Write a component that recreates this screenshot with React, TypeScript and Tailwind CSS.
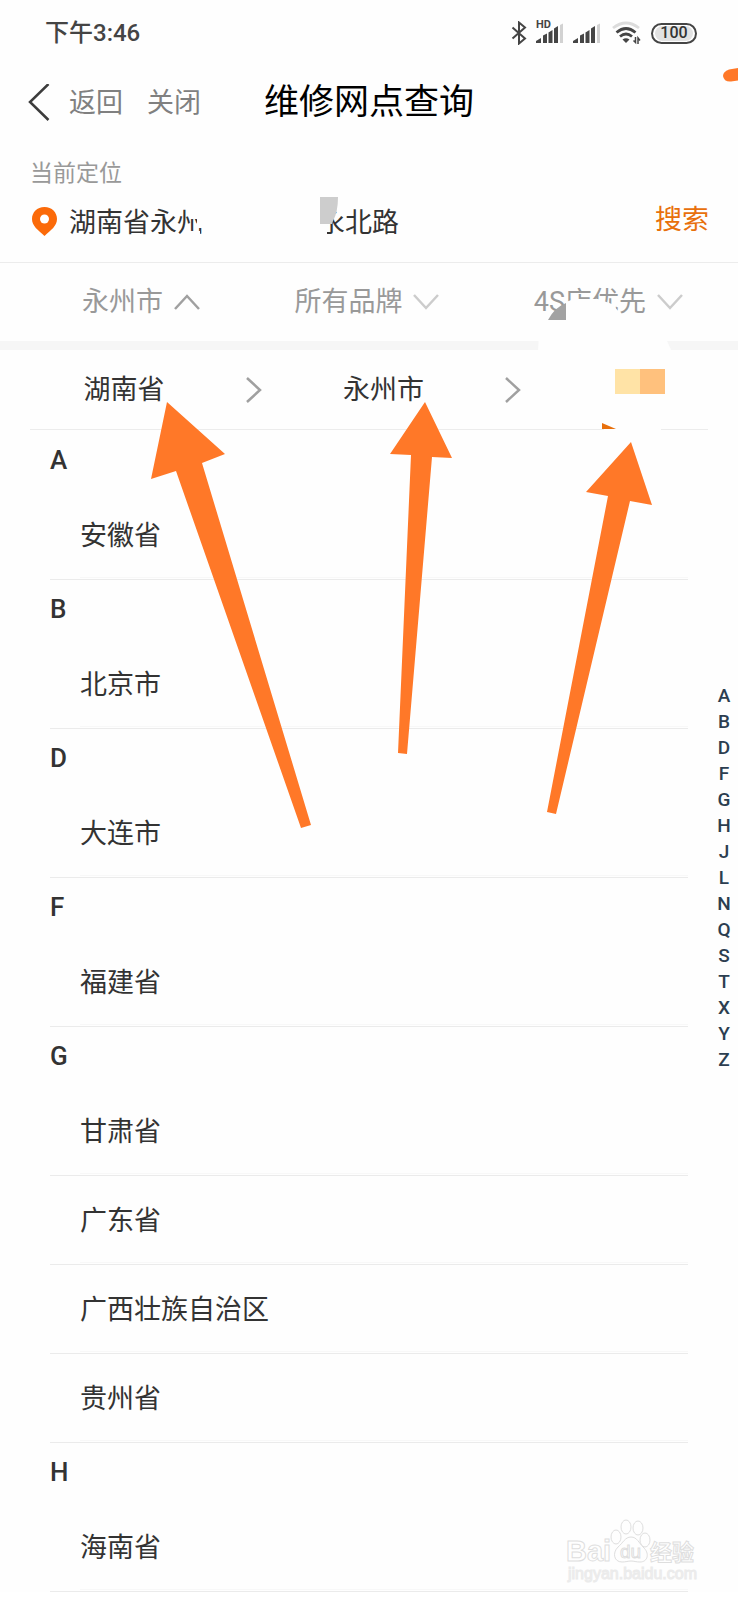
type Section = { letter: string; regions: string[] };

const sections: Section[] = [
  { letter: "A", regions: ["安徽省"] },
  { letter: "B", regions: ["北京市"] },
  { letter: "D", regions: ["大连市"] },
  { letter: "F", regions: ["福建省"] },
  { letter: "G", regions: ["甘肃省", "广东省", "广西壮族自治区", "贵州省"] },
  { letter: "H", regions: ["海南省"] },
];

const indexLetters = ["A", "B", "D", "F", "G", "H", "J", "L", "N", "Q", "S", "T", "X", "Y", "Z"];

function SignalIcon() {
  return (
    <svg width="28" height="20" viewBox="0 0 28 20" fill="#454545">
      <path d="M0 20v-2l5-3v5z" />
      <path d="M7 12.5l4-2V20H7z" />
      <path d="M12.500 9.500l4-2.500v13h-4z" />
      <path d="M18 5.500l4-2.500V20h-4z" />
      <path d="M24 2l3-1.500V20h-3z" fill="#d2d2d2" />
    </svg>
  );
}

function StatusBar() {
  return (
    <div className="flex h-[66px] items-center justify-between pl-[45px] pr-[41px]">
      <span className="text-[24px] font-medium text-[#444]">下午3:46</span>
      <div className="flex items-center">
        <svg width="16" height="24" viewBox="0 0 16 24" fill="none" stroke="#454545" strokeWidth="2">
          <path d="M1.500 6.500L14 17.500 8 22.500V1.500l6 5L1.500 17.500" />
        </svg>
        <div className="relative ml-[9px]">
          <SignalIcon />
          <span className="absolute -top-1 left-0 text-[11px] leading-[11px] font-bold text-[#454545]">HD</span>
        </div>
        <div className="ml-[9px]">
          <SignalIcon />
        </div>
        <svg className="ml-[11px]" width="29" height="24" viewBox="0 0 29 24" fill="none" strokeWidth="2.800">
          <path d="M1 7q13-10 26 0" stroke="#dcdcdc" />
          <path d="M4.500 11.500q9.500-8 19 0" stroke="#454545" />
          <path d="M8 15.500q6-5 12 0" stroke="#454545" />
          <path d="M10.500 18.500q3.500-2.500 7 0L14 22z" fill="#454545" />
          <path d="M23.500 16v5.500l-2-2M26 23v-6l2 2.500" stroke="#454545" strokeWidth="1.500" />
        </svg>
        <span className="ml-[10px] flex h-[21px] w-[46px] items-center justify-center rounded-full border-2 border-[#454545] p-[2px]">
          <span className="flex h-[15px] w-full items-center justify-center rounded-full bg-[#e2e2e2] text-[16px] leading-4 font-medium text-[#333]">
            100
          </span>
        </span>
      </div>
    </div>
  );
}

function Chevron({ direction, tone }: { direction: "up" | "down"; tone: string }) {
  return (
    <svg width="26" height="16" viewBox="0 0 26 16" fill="none" stroke={tone} strokeWidth="2.500">
      <path d={direction === "up" ? "M1 15L13 2l12 13" : "M1 1l12 13L25 1"} />
    </svg>
  );
}

function NextArrow() {
  return (
    <svg width="16" height="26" viewBox="0 0 16 26" fill="none" stroke="#a0a0a0" strokeWidth="2.500">
      <path d="M1 1l13 12L1 25" />
    </svg>
  );
}

function Annotations() {
  return (
    <svg
      className="pointer-events-none absolute top-0 left-0"
      width="738"
      height="840"
      viewBox="0 0 738 840"
      aria-hidden="true"
    >
      <g fill="#fefefe">
        <path d="M190 198h22v30h-15v-9h-7z" />
        <path d="M190 231h10v8h-10z" />
        <path d="M316 195h20v14l-5 14-4 3v12h-11z" />
        <path d="M566 302l8-3h24l14 5 8 9v8h-54z" />
        <path d="M539 332h124l9 20H538z" />
        <path d="M604 424h57v10h-57z" />
      </g>
      <path d="M320 197h18q0 15-5 24l-1 3h-12z" fill="#cdcdcd" />
      <path d="M548 320q6-12 18-17v17z" fill="#a2a2a2" />
      <path d="M602 423l14 6h-14z" fill="#e8700c" />
      <path d="M615 369h25v25h-25z" fill="#ffe3a6" />
      <path d="M640 369h25v25h-25z" fill="#ffc17d" />
      <g fill="#ff7828">
        <path d="M167 402l58 52-23 9 109 362-10 3L176 471l-25 8z" />
        <path d="M425 402l27 56-20-1-25 297-9-1 13-298-21-1z" />
        <path d="M631 442l21 63-22-4-74 313-9-2 61-316-22-4z" />
        <path d="M738 68l-9 1.500q-6 2-6 6.500 1 6 8 5.500l7-1z" />
      </g>
    </svg>
  );
}

function Watermark() {
  return (
    <svg
      className="pointer-events-none absolute top-[1515px] right-[34px]"
      width="140"
      height="72"
      viewBox="0 0 140 72"
      fill="#fefefe"
      stroke="#dedede"
      fontFamily="'Liberation Sans', 'Noto Sans CJK SC', sans-serif"
      aria-hidden="true"
    >
      <text x="2" y="46" fontSize="29" fontWeight="700">Bai</text>
      <ellipse cx="52" cy="22" rx="5" ry="7" />
      <ellipse cx="62" cy="12" rx="5" ry="7" />
      <ellipse cx="74" cy="13" rx="5" ry="7" />
      <ellipse cx="81" cy="25" rx="5" ry="7" />
      <path d="M67 22c6 0 8 6 12 10 7 6 5 15-3 15-4 0-6-1-9-1s-5 1-9 1c-8 0-10-9-4-15 5-4 7-10 13-10z" />
      <text x="56" y="43" fontSize="19">du</text>
      <text x="86" y="45" fontSize="22" fontWeight="700">经验</text>
      <text x="4" y="64" fontSize="16" fill="#f1f1f1" stroke="#ebebeb">jingyan.baidu.com</text>
    </svg>
  );
}

export default function App() {
  return (
    <div className="relative overflow-hidden bg-[#fefefe] font-[Roboto,'Noto_Sans_CJK_SC',sans-serif] text-[27px] leading-9 text-[#333]">
      <StatusBar />

      <header className="relative flex h-[72px] items-center justify-center pt-[2px]">
        <nav className="absolute left-7 flex items-center text-[#808080]">
          <button type="button" className="flex items-center gap-[19px]">
            <svg width="22" height="38" viewBox="0 0 22 38" fill="none" stroke="#3c3c3c" strokeWidth="2.500">
              <path d="M20.500 0L2 18l18.500 18" />
            </svg>
            返回
          </button>
          <button type="button" className="ml-6">关闭</button>
        </nav>
        <h1 className="text-[35px] text-black">维修网点查询</h1>
      </header>

      <section className="border-b border-[#ececec] pt-5 pb-2 pl-[30px] pr-[29px]">
        <h2 className="text-[23px] leading-8 text-[#999]">当前定位</h2>
        <div className="flex h-16 items-center pt-[2px]">
          <svg className="mb-1" width="28" height="30" viewBox="-1 0 28 30">
            <path d="M13.500 1C6 1 1 6.500 1 13c0 7 6 11 12.500 17C20 24 26 20 26 13 26 6.500 21 1 13.500 1z" fill="#fb6a09" />
            <circle cx="13.500" cy="13" r="4.500" fill="#fff" />
          </svg>
          <span className="ml-[11px]">湖南省永州</span>
          <span className="ml-[114px]">永北路</span>
          <button type="button" className="ml-auto pb-[6px] text-[#e8700c]">搜索</button>
        </div>
      </section>

      <div className="flex h-[78px] items-center justify-between pl-[82px] pr-[55px] text-[#999]">
        <button type="button" className="flex items-center gap-[11px]">
          永州市 <Chevron direction="up" tone="#a0a0a0" />
        </button>
        <button type="button" className="flex items-center gap-[11px]">
          所有品牌 <Chevron direction="down" tone="#cccccc" />
        </button>
        <button type="button" className="flex items-center gap-[11px]">
          4S店优先 <Chevron direction="down" tone="#cccccc" />
        </button>
      </div>
      <div className="h-[9px] bg-[#f6f6f6]" />

      <div className="mx-[30px] border-b border-[#ececec]">
        <div className="grid h-[79px] grid-cols-5 items-center justify-items-center pl-[29px]">
          <button type="button">湖南省</button>
          <NextArrow />
          <button type="button">永州市</button>
          <NextArrow />
        </div>
      </div>

      <main className="pt-px pr-[50px] pl-[50px]">
        {sections.map(({ letter, regions }) => (
          <section key={letter}>
            <h3 id={letter} className="h-[60px] pt-[11px] text-[26px] font-medium">{letter}</h3>
            <ul>
              {regions.map((region) => (
                <li key={region} className="border-b border-[#ebebeb] pb-px pl-[30px]">
                  <button type="button" className="flex h-[87px] w-full items-center border-b border-[#f8f8f8] pt-[3px] text-left">
                    {region}
                  </button>
                </li>
              ))}
            </ul>
          </section>
        ))}
      </main>

      <nav className="absolute top-[683px] right-0 flex w-7 flex-col items-center text-[19px] font-medium text-[#2c3e50]">
        {indexLetters.map((letter) => (
          <a key={letter} href={`#${letter}`} className="leading-[26px]">
            {letter}
          </a>
        ))}
      </nav>

      <Annotations />
      <Watermark />
    </div>
  );
}
